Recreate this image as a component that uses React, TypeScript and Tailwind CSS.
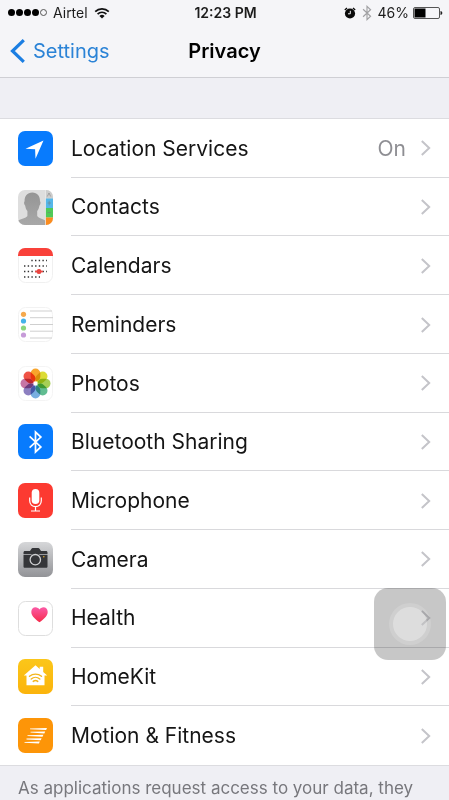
import React, { ReactNode } from "react";

interface SettingsItem {
	id: string;
	label: string;
	icon: ReactNode;
	value?: string;
}

// Status bar icons
const WifiIcon = () => (
	<svg className="w-4 h-3" viewBox="0 0 16 12" fill="none" stroke="#111">
		<path d="M1.2 4.6a9.6 9.6 0 0 1 13.6 0" strokeWidth="1.7" />
		<path d="M3.6 7.1a6.2 6.2 0 0 1 8.8 0" strokeWidth="1.7" />
		<path d="M8 11.6 5.4 9a3.7 3.7 0 0 1 5.2 0z" fill="#111" stroke="none" />
	</svg>
);

const AlarmIcon = () => (
	<svg className="w-3 h-3" viewBox="0 0 12 12" fill="none">
		<circle cx="6" cy="6.5" r="5.1" fill="#0a0a0a" />
		<path d="M.8 3 3 1M11.2 3 9 1" stroke="#0a0a0a" strokeWidth="1.3" />
		<path d="M6.3 3.8v3H4" stroke="#f4f4f6" strokeWidth="1" />
	</svg>
);

const BluetoothGlyph = ({ className }: { className: string }) => (
	<svg
		className={className}
		viewBox="0 0 14 22"
		fill="none"
		stroke="currentColor"
		strokeWidth="1.6">
		<path d="M1.5 5.8 12 15.6 7 20.3V1.7l5 4.7L1.5 16.2" />
	</svg>
);

const BatteryIcon = () => (
	<svg className="w-[30px] h-3" viewBox="0 0 30 12" fill="none">
		<rect x=".5" y=".5" width="26" height="11" rx="1.5" stroke="#555" />
		<rect x="1.5" y="1.5" width="11" height="9" fill="#000" />
		<path d="M27.5 4v4c1.2-.3 1.8-1 1.8-2s-.6-1.7-1.8-2z" fill="#222" />
	</svg>
);

const Chevron = () => (
	<svg
		className="w-[11px] h-4 shrink-0"
		viewBox="0 0 11 16"
		fill="none"
		stroke="#c4c4c9"
		strokeWidth="2">
		<path d="m1.8 1 7.4 7-7.4 7" />
	</svg>
);

// App icons
const LocationIcon = () => (
	<svg className="w-full h-full" viewBox="0 0 35 35">
		<rect width="35" height="35" rx="7" fill="#087bfd" />
		<path d="M25.5 9.5 7.5 17.7l9.6.5.4 9.6z" fill="#fff" />
	</svg>
);

const ContactsIcon = () => (
	<svg className="w-full h-full" viewBox="0 0 35 35">
		<defs>
			<clipPath id="contacts-clip">
				<rect width="35" height="35" rx="7" />
			</clipPath>
			<linearGradient id="contacts-body" x1="0" y1="0" x2="0" y2="1">
				<stop offset="0" stopColor="#959595" />
				<stop offset="1" stopColor="#a8a8a8" />
			</linearGradient>
		</defs>
		<g clipPath="url(#contacts-clip)">
			<rect width="35" height="35" fill="#dedede" />
			<path
				d="M14.3 2.5c5 0 7.900 3.500 7.700 8.800.9.700.7 3-.6 4.500-.4 2.200-1 4-2.200 5.200v5c1.500 2.500 5.500 2.500 8.300 4.800V35H0v-4.200c2.800-2.300 7.900-2.300 9.400-4.800v-5c-1.200-1.200-1.900-3-2.200-5.200-1.300-1.500-1.500-3.800-.6-4.500-.2-5.300 2.700-8.800 7.700-8.800z"
				fill="url(#contacts-body)"
			/>
			<rect x="27.5" width="7.5" height="8.5" fill="#cdcdcd" />
			<rect x="27.5" y="8.5" width="7.5" height="9.5" fill="#55b7e9" />
			<rect x="27.5" y="18" width="7.5" height="9.5" fill="#4fca58" />
			<rect x="27.5" y="27.5" width="7.5" height="8" fill="#fb8c1f" />
			<path
				d="m29.3 6.5 1.7-3.500 1.7 3.500M29.5 13h3.500M31.2 10.8v4.500M29.5 22.5h3.500"
				stroke="#777"
				strokeOpacity=".5"
				fill="none"
			/>
			<path d="M27.5 0v35" stroke="#eee" strokeWidth=".7" />
		</g>
	</svg>
);

const CalendarIcon = () => (
	<svg className="w-full h-full" viewBox="0 0 35 35">
		<rect x=".5" y=".5" width="34" height="34" rx="7" fill="#fff" stroke="#f0f0f0" />
		<path d="M0 8V7a7 7 0 0 1 7-7h21a7 7 0 0 1 7 7v1z" fill="#f9413a" />
		<g stroke="#333" strokeWidth="1.4" strokeDasharray="1.4 2.3">
			<path d="M13.3 12.5H29" />
			<path d="M6 18h23" />
			<path d="M6 23.5h23" />
			<path d="M6 29h16" />
		</g>
		<path d="M17 23.5h8" stroke="#e84a45" strokeWidth="1.5" />
		<circle cx="21" cy="23.5" r="2.5" fill="#ea4540" />
	</svg>
);

const RemindersIcon = () => (
	<svg className="w-full h-full" viewBox="0 0 35 35">
		<rect x=".5" y=".5" width="34" height="34" rx="7" fill="#fff" stroke="#f2f2f2" />
		<path
			d="M12 4h22M12 10.7h23M12 17.5h23M12 24.2h23M12 31h22"
			stroke="#cfcfcf"
		/>
		<circle cx="5.5" cy="7.3" r="2.6" fill="#f5a94e" />
		<circle cx="5.5" cy="14" r="2.6" fill="#45b3ea" />
		<circle cx="5.5" cy="21" r="2.6" fill="#8bd67e" />
		<circle cx="5.5" cy="28" r="2.6" fill="#c69bd8" />
	</svg>
);

const petals = [
	{ angle: 0, color: "#f8a52c" },
	{ angle: 45, color: "#dcdc35" },
	{ angle: 90, color: "#a6cf55" },
	{ angle: 135, color: "#61bd91" },
	{ angle: 180, color: "#78aee0" },
	{ angle: 225, color: "#8c7fc0" },
	{ angle: 270, color: "#c775a5" },
	{ angle: 315, color: "#ef5346" },
];

const PhotosIcon = () => (
	<svg className="w-full h-full" viewBox="0 0 35 35">
		<rect x=".5" y=".5" width="34" height="34" rx="7" fill="#fff" stroke="#f4f4f4" />
		<g className="isolate">
			{petals.map((petal) => (
				<rect
					key={petal.angle}
					x="12.7"
					y="2.5"
					width="9.6"
					height="13"
					rx="4.8"
					fill={petal.color}
					className="mix-blend-multiply"
					transform={`rotate(${petal.angle} 17.5 17.5)`}
				/>
			))}
		</g>
		<circle cx="17.5" cy="17.5" r="1.3" fill="#fff" />
	</svg>
);

const BluetoothIcon = () => (
	<div className="flex items-center justify-center w-full h-full text-white bg-[#087bfd] rounded-[7px]">
		<BluetoothGlyph className="w-[15px] h-6" />
	</div>
);

const MicrophoneIcon = () => (
	<svg className="w-full h-full" viewBox="0 0 35 35" fill="none">
		<rect width="35" height="35" rx="7" fill="#fc3a31" />
		<rect x="13.7" y="6" width="7.6" height="15" rx="3.8" fill="#fff" />
		<path
			d="M11.7 14.5v3.200c0 3.600 2.600 6 5.800 6s5.800-2.400 5.800-6v-3.200M17.5 23.7v4M13 28h9"
			stroke="#fff"
			strokeWidth="1.2"
		/>
	</svg>
);

const CameraIcon = () => (
	<svg className="w-full h-full" viewBox="0 0 35 35" fill="none">
		<defs>
			<linearGradient id="camera-bg" x1="0" y1="0" x2="0" y2="1">
				<stop offset="0" stopColor="#d6d7d9" />
				<stop offset="1" stopColor="#929397" />
			</linearGradient>
		</defs>
		<rect width="35" height="35" rx="7" fill="url(#camera-bg)" />
		<path
			d="M5.5 10.5c0-1 .6-1.600 1.500-1.600h5l1.500-2.200c.3-.4.600-.6 1.200-.6h5.600c.6 0 .9.2 1.200.6L23 8.900h5c.9 0 1.500.6 1.500 1.600V12h-24zM5.500 12.800h24v11.700c0 .8-.5 1.300-1.300 1.300H6.800c-.8 0-1.300-.5-1.300-1.300z"
			fill="#353639"
		/>
		<circle cx="17.3" cy="17.7" r="6.5" fill="#353639" />
		<circle cx="17.3" cy="17.7" r="5.2" stroke="#d0d1d3" strokeWidth="1.3" />
		<circle cx="25.8" cy="14.8" r=".8" fill="#e0a92e" />
	</svg>
);

const HealthIcon = () => (
	<svg className="w-full h-full" viewBox="0 0 35 35">
		<defs>
			<linearGradient id="health-heart" x1="0" y1="0" x2="0" y2="1">
				<stop offset="0" stopColor="#fb5aa6" />
				<stop offset="1" stopColor="#f62a49" />
			</linearGradient>
		</defs>
		<rect x=".5" y=".5" width="34" height="34" rx="7" fill="#fff" stroke="#dedede" />
		<path
			d="M21.5 21.3c-2.800-2.100-8.200-5.600-8.200-10.300 0-2.900 1.900-4.700 4.200-4.700 1.700 0 3.200.9 4 2.300.8-1.400 2.300-2.300 4-2.300 2.300 0 4.200 1.800 4.200 4.700 0 4.700-5.400 8.200-8.200 10.300z"
			fill="url(#health-heart)"
		/>
	</svg>
);

const HomeKitIcon = () => (
	<svg className="w-full h-full" viewBox="0 0 35 35" fill="none">
		<defs>
			<linearGradient id="homekit-bg" x1="0" y1="0" x2="0" y2="1">
				<stop offset="0" stopColor="#fbc61a" />
				<stop offset="1" stopColor="#fbb40c" />
			</linearGradient>
		</defs>
		<rect width="35" height="35" rx="7" fill="url(#homekit-bg)" />
		<path
			d="m17.5 6.2 4.2 3.700V7.700h3.500v5.300l4 3.600h-2.700v9.700h-18v-9.700H5.800z"
			fill="#fff"
		/>
		<g stroke="#f3b51c" strokeWidth="1.4" strokeLinecap="round">
			<path d="M11.5 17.3a9.500 9.500 0 0 1 12 0" />
			<path d="M13.2 20a6.500 6.500 0 0 1 8.600 0" />
			<path d="M15.2 22.4a3.500 3.500 0 0 1 4.600 0" />
		</g>
	</svg>
);

const MotionIcon = () => (
	<svg className="w-full h-full" viewBox="0 0 35 35" fill="none">
		<rect width="35" height="35" rx="7" fill="#fd9508" />
		<g fill="#fff">
			<path d="m12 10.400 17-.4-.9 2-16.100-.8z" />
			<path d="m12.500 13.800 14.700-.4-.9 2-13.800-.8z" />
			<path d="m9.500 17.200 15.900-.4-.9 2-15-.8z" />
			<path d="m8.500 20.600 15.100-.4-.9 2-14.200-.8z" />
			<path d="m6.500 24 15.300-.4-.9 2-14.400-.8z" />
		</g>
	</svg>
);

const items: SettingsItem[] = [
	{ id: "location", label: "Location Services", icon: <LocationIcon />, value: "On" },
	{ id: "contacts", label: "Contacts", icon: <ContactsIcon /> },
	{ id: "calendars", label: "Calendars", icon: <CalendarIcon /> },
	{ id: "reminders", label: "Reminders", icon: <RemindersIcon /> },
	{ id: "photos", label: "Photos", icon: <PhotosIcon /> },
	{ id: "bluetooth", label: "Bluetooth Sharing", icon: <BluetoothIcon /> },
	{ id: "microphone", label: "Microphone", icon: <MicrophoneIcon /> },
	{ id: "camera", label: "Camera", icon: <CameraIcon /> },
	{ id: "health", label: "Health", icon: <HealthIcon /> },
	{ id: "homekit", label: "HomeKit", icon: <HomeKitIcon /> },
	{ id: "motion", label: "Motion & Fitness", icon: <MotionIcon /> },
];

const SignalDots = () => (
	<div className="flex gap-px">
		{[1, 2, 3, 4].map((dot) => (
			<span key={dot} className="w-[7px] h-[7px] bg-black rounded-full" />
		))}
		<span className="w-[7px] h-[7px] border border-[#555] rounded-full" />
	</div>
);

const StatusBar = () => (
	<div className="grid items-center h-[25px] grid-cols-[1fr_auto_1fr] pl-2 pr-[6px] text-sm text-[#1c1c1c]">
		<div className="flex items-center gap-[6px]">
			<SignalDots />
			<span>Airtel</span>
			<WifiIcon />
		</div>
		<span className="font-semibold">12:23 PM</span>
		<div className="flex items-center justify-end gap-[6px]">
			<AlarmIcon />
			<BluetoothGlyph className="w-[10px] h-4 text-[#a0a0a3]" />
			<div className="flex items-center gap-1">
				<span>46%</span>
				<BatteryIcon />
			</div>
		</div>
	</div>
);

const NavBar = () => (
	<nav className="grid items-center h-[52px] grid-cols-[1fr_auto_1fr] px-[10px]">
		<a href="#settings" className="flex items-center gap-2 text-xl text-[#2b83d6]">
			<svg
				className="w-[15px] h-6"
				viewBox="0 0 15 24"
				fill="none"
				stroke="#1b7ee2"
				strokeWidth="3.2">
				<path d="M13.8 1.2 2.5 12l11.3 10.8" />
			</svg>
			Settings
		</a>
		<h1 className="text-xl font-semibold text-black">Privacy</h1>
	</nav>
);

const SettingsRow: React.FC<{ item: SettingsItem; isLast: boolean }> = ({
	item,
	isLast,
}) => {
	return (
		<li className="flex pl-[18px]">
			<a href={`#${item.id}`} className="flex items-center flex-1 gap-[18px]">
				<span className="w-[35px] h-[35px] shrink-0">{item.icon}</span>
				<span
					className={`flex items-center self-stretch flex-1 pt-px pr-[18px] ${
						isLast ? "" : "border-b border-[#d9d9dc]"
					}`}>
					<span className="flex-1 text-[21px] text-[#151515]">{item.label}</span>
					{item.value && (
						<span className="mr-[14px] text-[21px] text-[#8e8e93]">
							{item.value}
						</span>
					)}
					<Chevron />
				</span>
			</a>
		</li>
	);
};

// Floating touch button that sits over the list
const AssistiveTouch = () => (
	<button
		aria-label="AssistiveTouch"
		className="absolute flex items-center justify-center w-[72px] h-[72px] top-[588px] right-[3px] bg-black/22 rounded-[14px]">
		<span className="flex items-center justify-center w-[42px] h-[42px] rounded-full bg-white/15">
			<span className="w-[34px] h-[34px] rounded-full bg-white/30" />
		</span>
	</button>
);

export default function App() {
	return (
		<div className="relative min-h-screen overflow-hidden bg-[#efeff4] font-['Inter',sans-serif]">
			<header className="bg-[#f5f5f8] border-b border-[#cfcfd4]">
				<StatusBar />
				<NavBar />
			</header>
			<main className="pt-10">
				<ul className="grid auto-rows-fr min-h-[648px] bg-white border-y border-[#dcdce0]">
					{items.map((item, index) => (
						<SettingsRow
							key={item.id}
							item={item}
							isLast={index === items.length - 1}
						/>
					))}
				</ul>
				<p className="px-[18px] pt-[10px] text-[17px] leading-6 text-[#77777c]">
					As applications request access to your data, they
				</p>
			</main>
			<AssistiveTouch />
		</div>
	);
}
